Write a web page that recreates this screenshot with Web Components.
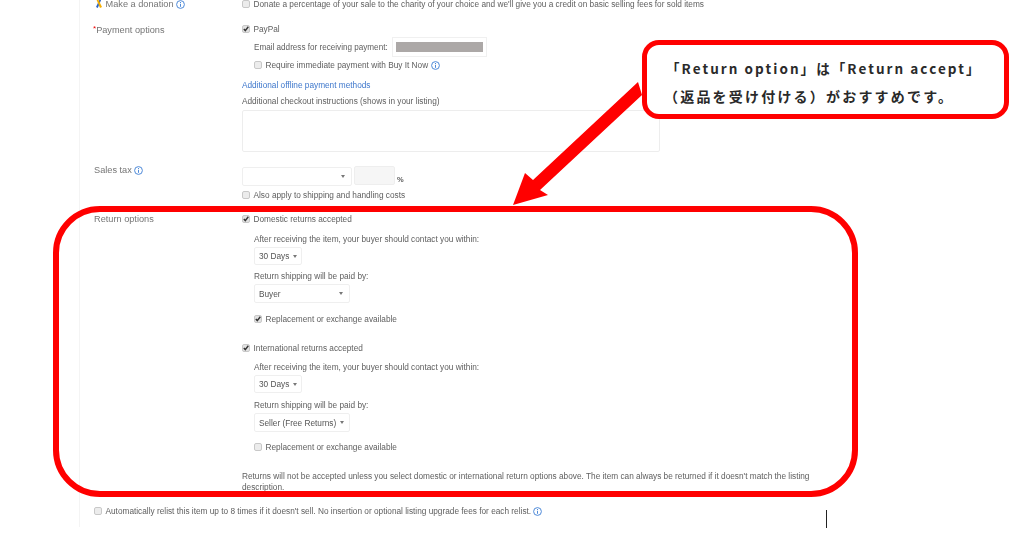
<!DOCTYPE html>
<html lang="en">
<head>
<meta charset="utf-8">
<style>
html,body{margin:0;padding:0;background:#fff;height:545px;overflow:hidden}
body{font-family:"Liberation Sans",Arial,sans-serif;color:#555}
</style>
</head>
<body>
<template id="t-info"><style>
:host{display:inline-block;width:9px;height:9px;vertical-align:-1.5px}
svg{display:block}
</style><svg width="9" height="9" viewBox="0 0 9 9"><circle cx="4.5" cy="4.5" r="3.9" fill="none" stroke="#4f8ad8" stroke-width="1"/><rect x="4" y="3.8" width="1" height="3" fill="#4f8ad8"/><rect x="4" y="2" width="1" height="1" fill="#4f8ad8"/></svg></template>

<template id="t-check"><style>
:host{display:flex;align-items:center;height:12px;font-size:8.27px;line-height:12px;white-space:nowrap;color:#606060}
.b{width:8px;height:8px;box-sizing:border-box;border:1px solid #c8c8c8;border-radius:2px;background:#ececec;margin-right:3.5px;flex:none;position:relative;top:-.5px}
:host([checked]) .b{background:#e2e2e2}
svg{display:none;position:absolute;left:-1px;top:-1px}
:host([checked]) svg{display:block}
.t{padding-top:2px}
</style><span class="b"><svg width="8" height="8" viewBox="0 0 8 8"><path d="M1.8 4 L3.3 5.6 L6.3 1.8" fill="none" stroke="#333" stroke-width="1.4"/></svg></span><span class="t"><slot></slot></span></template>

<template id="t-select"><style>
:host{display:flex;align-items:center;box-sizing:border-box;border:1px solid #efefef;border-radius:2px;background:#fff;padding:0 4px;font-size:8.27px;color:#555;white-space:nowrap;height:19px}
span{flex:1;padding-top:var(--text-drop,2px)}
i{width:0;height:0;border:2.5px solid transparent;border-top:3px solid #777;border-bottom:0;margin-left:var(--caret-gap,3px);margin-right:var(--caret-right,1px)}
</style><span><slot></slot></span><i></i></template>

<template id="t-text"><style>
:host{display:block;font-size:8.27px;line-height:12px;padding-top:1px;margin-bottom:-1px;color:#606060;white-space:nowrap}
:host([link]){color:#3f78cc}
</style><slot></slot></template>

<template id="t-row"><style>
:host{display:grid;grid-template-columns:148px 1fr}
.l{font-size:9.2px;line-height:12px;color:#757575;white-space:nowrap}
.c{min-width:0}
</style><div class="l"><slot name="label"></slot></div><div class="c"><slot></slot></div></template>

<template id="t-panel"><style>
:host{display:block;box-sizing:border-box;margin:-2px 0 0 79px;width:720px;height:529px;border-left:1px solid #f4f4f4;padding-left:14px;filter:blur(.4px)}
</style><slot></slot></template>

<template id="t-callout"><style>
:host{position:absolute;left:642px;top:40px;width:367px;height:79px;box-sizing:border-box;border:5px solid #f00;border-radius:17px;background:#fff;padding:9px 0 0 23px;font-family:"Noto Sans CJK JP",sans-serif;font-weight:700;font-size:13.5px;line-height:28px;color:#2a2a2a;white-space:nowrap}
.a{letter-spacing:2.06px;margin-left:-4px}
.b{font-size:14px;letter-spacing:2.2px;margin-left:-6px}
</style><div class="a"><slot name="a"></slot></div><div class="b"><slot name="b"></slot></div></template>

<template id="t-marks"><style>
:host{position:absolute;left:0;top:0;width:1024px;height:545px;pointer-events:none}
svg{display:block}
</style><svg width="1024" height="545" viewBox="0 0 1024 545">
<rect x="56" y="209" width="799" height="285" rx="44" fill="none" stroke="#f00" stroke-width="6"/>
<polygon points="638,82 642,95 540,190 548,195 513,205 525,173 533,180" fill="#f00"/>
<rect x="826" y="510" width="1" height="18" fill="#222"/>
</svg></template>

<x-panel>
  <x-row style="height:12px">
    <span slot="label" style="margin-left:1px"><svg width="8" height="9" viewBox="0 0 8 9" style="vertical-align:-1px"><path d="M6.5 0 L4.8 0 L1 8 L2.8 9 Z" fill="#2b63c6"/><path d="M1.2 0 L3 0 L7 8 L5 9 Z" fill="#f5af02"/></svg> Make a donation <x-info></x-info></span>
    <x-check>Donate a percentage of your sale to the charity of your choice and we'll give you a credit on basic selling fees for sold items</x-check>
  </x-row>
  <x-row style="margin-top:13px">
    <span slot="label"><span style="color:#e00;font-size:8px;vertical-align:2px;margin-left:-1px">*</span>Payment options</span>
    <div>
      <x-check checked>PayPal</x-check>
      <div style="margin:2px 0 0 12px;display:flex;align-items:center;height:20px;gap:4px">
        <x-text style="font-size:8.15px">Email address for receiving payment:</x-text>
        <div style="box-sizing:border-box;width:95px;height:20px;border:1px solid #f0f0f0;padding:4px 3px"><div style="height:10px;background:#aca8a7"></div></div>
      </div>
      <x-check style="margin:2px 0 0 12px">Require immediate payment with Buy It Now <x-info style="margin-left:1px"></x-info></x-check>
      <x-text link style="margin-top:8px">Additional offline payment methods</x-text>
      <x-text style="margin-top:4px">Additional checkout instructions (shows in your listing)</x-text>
      <div style="margin-top:3px;width:418px;height:42px;box-sizing:border-box;border:1px solid #ededed;border-radius:2px"></div>
    </div>
  </x-row>
  <x-row style="margin-top:15px">
    <span slot="label" style="position:relative;top:-3px">Sales tax <x-info></x-info></span>
    <div>
      <div style="display:flex;gap:2px;align-items:flex-start;height:19px">
        <x-select style="width:110px;--caret-right:2px"></x-select>
        <div style="width:41px;height:19px;margin-top:-1px;background:#f6f6f6;border:1px solid #eee;box-sizing:border-box;border-radius:2px"></div>
        <x-text style="font-size:7.5px;margin-top:6px;font-weight:700">%</x-text>
      </div>
      <x-check style="margin-top:3px">Also apply to shipping and handling costs</x-check>
    </div>
  </x-row>
  <x-row style="margin-top:12px">
    <span slot="label">Return options</span>
    <div>
      <x-check checked>Domestic returns accepted</x-check>
      <div style="margin-left:12px">
        <x-text style="margin-top:8px">After receiving the item, your buyer should contact you within:</x-text>
        <x-select style="margin-top:2px;width:48px;height:18px;--caret-right:0;--text-drop:0">30 Days</x-select>
        <x-text style="margin-top:5px">Return shipping will be paid by:</x-text>
        <x-select style="margin-top:2px;width:96px;--caret-right:2px">Buyer</x-select>
        <x-check checked style="margin-top:10px">Replacement or exchange available</x-check>
      </div>
      <x-check checked style="margin-top:17px">International returns accepted</x-check>
      <div style="margin-left:12px">
        <x-text style="margin-top:7px">After receiving the item, your buyer should contact you within:</x-text>
        <x-select style="margin-top:2px;width:48px;height:18px;--caret-right:0;--text-drop:0">30 Days</x-select>
        <x-text style="margin-top:6px">Return shipping will be paid by:</x-text>
        <x-select style="margin-top:2px;width:96px">Seller (Free Returns)</x-select>
        <x-check style="margin-top:9px">Replacement or exchange available</x-check>
      </div>
      <x-text style="margin-top:17px;white-space:normal;width:580px;line-height:11px">Returns will not be accepted unless you select domestic or international return options above. The item can always be returned if it doesn't match the listing description.</x-text>
    </div>
  </x-row>
  <x-check style="margin-top:13px">Automatically relist this item up to 8 times if it doesn't sell. No insertion or optional listing upgrade fees for each relist.&nbsp;<x-info></x-info></x-check>
</x-panel>
<x-marks></x-marks>
<x-callout><span slot="a">「Return option」は「Return accept」</span><span slot="b">（返品を受け付ける）がおすすめです。</span></x-callout>
<script>
const map={'x-info':'t-info','x-check':'t-check','x-select':'t-select','x-text':'t-text','x-row':'t-row','x-panel':'t-panel','x-callout':'t-callout','x-marks':'t-marks'};
for(const [name,id] of Object.entries(map)){
  customElements.define(name,class extends HTMLElement{
    constructor(){super();this.attachShadow({mode:'open'}).appendChild(document.getElementById(id).content.cloneNode(true));}
  });
}
</script>
</body>
</html>
